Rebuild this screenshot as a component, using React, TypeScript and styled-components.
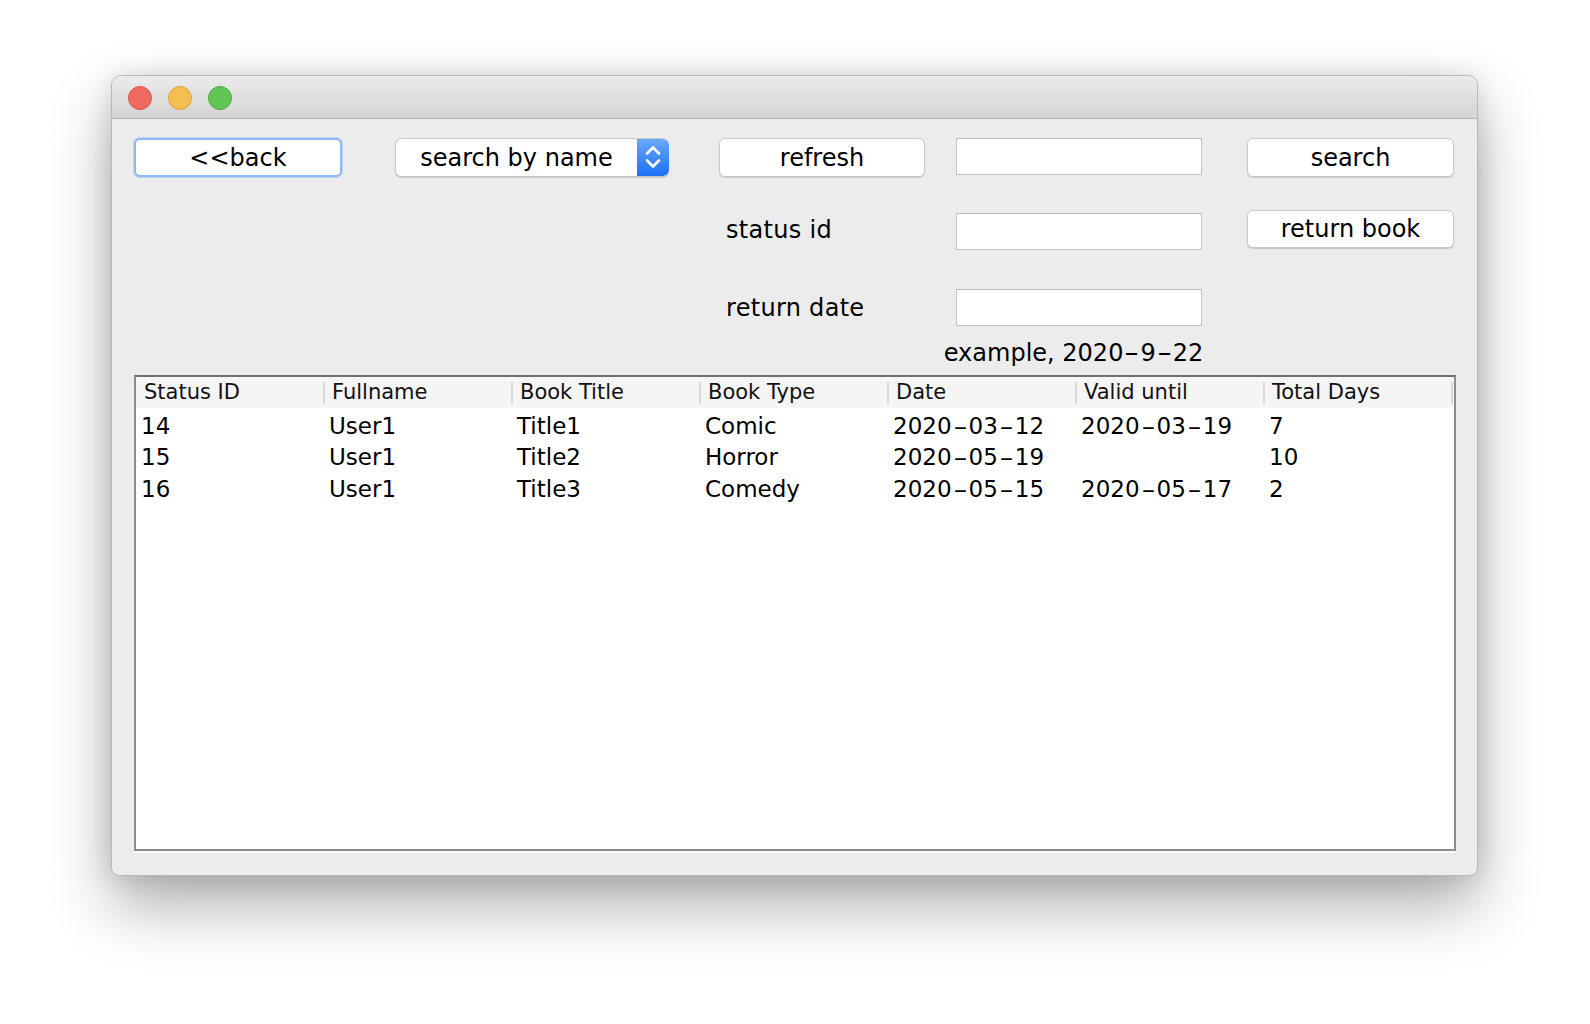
import React from "react";
import styled, { createGlobalStyle } from "styled-components";

const GlobalStyle = createGlobalStyle`
  html, body { margin: 0; padding: 0; background: #ffffff; }
  body { font-family: "DejaVu Sans", "Liberation Sans", sans-serif; }
`;

const FONT = `"DejaVu Sans", "Liberation Sans", sans-serif`;

const Page = styled.div`
  width: 1590px;
  height: 1024px;
  box-sizing: border-box;
  padding: 75px 0 0 111px;
  background: #ffffff;
  overflow: hidden;
`;

const Window = styled.div`
  width: 1367px;
  height: 801px;
  box-sizing: border-box;
  display: flex;
  flex-direction: column;
  background: #ececec;
  border: 1px solid #b8b8b8;
  border-radius: 10px 10px 8px 8px;
  box-shadow: 0 30px 62px rgba(0, 0, 0, 0.32), 0 0 26px rgba(0, 0, 0, 0.12);
  overflow: hidden;
`;

const TitleBar = styled.div`
  height: 43px;
  flex: none;
  display: flex;
  align-items: center;
  gap: 16px;
  padding: 1px 0 0 16px;
  box-sizing: border-box;
  background: linear-gradient(#ebebeb, #d4d4d4);
  border-bottom: 1px solid #b3b3b3;
`;

const Light = styled.span<{ $fill: string; $stroke: string }>`
  width: 24px;
  height: 24px;
  box-sizing: border-box;
  border-radius: 50%;
  background: ${(p) => p.$fill};
  border: 1px solid ${(p) => p.$stroke};
`;

const Content = styled.div`
  flex: 1;
  display: flex;
  flex-direction: column;
  padding: 19px 21px 24px 22px;
  min-height: 0;
`;

const FormRow = styled.div<{ $mt: number; $h: number }>`
  display: grid;
  grid-template-columns: 261px 324px 237px 291px 1fr;
  height: ${(p) => p.$h}px;
  margin-top: ${(p) => p.$mt}px;
  align-items: start;
`;

const Button = styled.button<{ $w: number; $h?: number; $focused?: boolean; $col: number; $mt?: number }>`
  grid-column: ${(p) => p.$col};
  box-sizing: border-box;
  width: ${(p) => p.$w}px;
  height: ${(p) => p.$h ?? 39}px;
  margin-top: ${(p) => p.$mt ?? 0}px;
  padding: 0;
  background: #ffffff;
  border: ${(p) => (p.$focused ? "2px solid #8db8f1" : "1px solid #c9c9c9")};
  border-radius: 6px;
  box-shadow: ${(p) =>
    p.$focused ? "0 0 0 1px rgba(160, 196, 242, 0.6)" : "0 1px 1px rgba(0, 0, 0, 0.16)"};
  font-family: ${FONT};
  font-size: 24px;
  color: #000;
  cursor: default;
`;

const Combo = styled.div<{ $col: number }>`
  grid-column: ${(p) => p.$col};
  width: 274px;
  height: 39px;
  box-sizing: border-box;
  display: flex;
  background: #ffffff;
  border: 1px solid #c9c9c9;
  border-right: none;
  border-radius: 6px;
  box-shadow: 0 1px 1px rgba(0, 0, 0, 0.16);
  overflow: hidden;
`;

const ComboText = styled.span`
  flex: 1;
  display: flex;
  align-items: center;
  justify-content: center;
  font-family: ${FONT};
  font-size: 24px;
  color: #000;
`;

const ComboArrow = styled.span`
  width: 32px;
  flex: none;
  display: flex;
  align-items: center;
  justify-content: center;
  background: linear-gradient(#6aa9fc, #1b70f5);
  border-radius: 0 6px 6px 0;
`;

const Field = styled.input<{ $col: number; $self?: string }>`
  grid-column: ${(p) => p.$col};
  align-self: ${(p) => p.$self ?? "start"};
  width: 246px;
  height: 37px;
  box-sizing: border-box;
  background: #ffffff;
  border: 1px solid #c4c4c4;
  border-top-color: #b9b9b9;
  border-radius: 0;
  outline: none;
  padding: 0 6px;
  font-family: ${FONT};
  font-size: 22px;
`;

const Label = styled.span<{ $col: number }>`
  grid-column: ${(p) => p.$col};
  align-self: center;
  padding-left: 7px;
  font-family: ${FONT};
  font-size: 24px;
  letter-spacing: 0.3px;
  color: #000;
`;

const Hint = styled.span<{ $col: number }>`
  grid-column: ${(p) => p.$col};
  justify-self: start;
  width: 265px;
  margin-left: -15px;
  text-align: center;
  line-height: 30px;
  font-family: ${FONT};
  font-size: 24px;
  white-space: nowrap;
  color: #000;
`;

const Dash = styled.span<{ $w: number }>`
  display: inline-block;
  width: ${(p) => p.$w}px;
  text-align: center;
  transform: scaleX(1.75);
`;

const TableBox = styled.div`
  flex: 1;
  margin-top: 7px;
  background: #ffffff;
  border: 2px solid #8c8c8c;
  border-top-color: #707070;
  box-shadow: 0 2px 0 #ffffff;
  display: flex;
  flex-direction: column;
  min-height: 0;
`;

const Grid = styled.div`
  display: grid;
  grid-template-columns: repeat(7, 188px);
`;

const HeaderRow = styled(Grid)`
  background: #f5f5f5;
  height: 31px;
`;

const HeaderCell = styled.div`
  position: relative;
  padding: 3px 0 0 8px;
  line-height: 25px;
  font-family: ${FONT};
  font-size: 21px;
  color: #111;
  white-space: nowrap;

  &::after {
    content: "";
    position: absolute;
    right: -1px;
    top: 5px;
    bottom: 4px;
    width: 2px;
    background: #dadada;
  }
`;

const DataRow = styled(Grid)`
  height: 31.3px;
`;

const DataCell = styled.div`
  padding: 6px 0 0 5px;
  line-height: 25px;
  font-family: ${FONT};
  font-size: 23px;
  color: #000;
  white-space: nowrap;
`;

const columns = ["Status ID", "Fullname", "Book Title", "Book Type", "Date", "Valid until", "Total Days"];

const rows = [
  ["14", "User1", "Title1", "Comic", "2020-03-12", "2020-03-19", "7"],
  ["15", "User1", "Title2", "Horror", "2020-05-19", "", "10"],
  ["16", "User1", "Title3", "Comedy", "2020-05-15", "2020-05-17", "2"],
];

function WideDashes({ text, w }: { text: string; w: number }) {
  const parts = text.split("-");
  return (
    <>
      {parts.map((p, i) => (
        <React.Fragment key={i}>
          {i > 0 && <Dash $w={w}>-</Dash>}
          {p}
        </React.Fragment>
      ))}
    </>
  );
}

const Chevrons = () => (
  <svg width="32" height="37" viewBox="0 0 32 37">
    <path d="M10 14.5 L16 8.5 L22 14.5" stroke="#fff" strokeWidth="2.6" fill="none" strokeLinecap="round" strokeLinejoin="round" />
    <path d="M10 21.5 L16 27.5 L22 21.5" stroke="#fff" strokeWidth="2.6" fill="none" strokeLinecap="round" strokeLinejoin="round" />
  </svg>
);

export default function App() {
  return (
    <>
      <GlobalStyle />
      <Page>
        <Window>
          <TitleBar>
            <Light $fill="#ee6a5f" $stroke="#d9574c" />
            <Light $fill="#f5bf4f" $stroke="#d9a33f" />
            <Light $fill="#62c655" $stroke="#50a842" />
          </TitleBar>
          <Content>
            <FormRow $mt={0} $h={39}>
              <Button $col={1} $w={208} $focused>
                &lt;&lt;back
              </Button>
              <Combo $col={2}>
                <ComboText>search by name</ComboText>
                <ComboArrow>
                  <Chevrons />
                </ComboArrow>
              </Combo>
              <Button $col={3} $w={206}>
                refresh
              </Button>
              <Field $col={4} />
              <Button $col={5} $w={207}>
                search
              </Button>
            </FormRow>
            <FormRow $mt={32} $h={41}>
              <Label $col={3}>status id</Label>
              <Field $col={4} $self="end" />
              <Button $col={5} $w={207} $h={38} $mt={1}>
                return book
              </Button>
            </FormRow>
            <FormRow $mt={39} $h={37}>
              <Label $col={3}>return date</Label>
              <Field $col={4} />
            </FormRow>
            <FormRow $mt={12} $h={30}>
              <Hint $col={4}>
                <WideDashes text="example, 2020-9-22" w={17} />
              </Hint>
            </FormRow>
            <TableBox>
              <HeaderRow>
                {columns.map((c) => (
                  <HeaderCell key={c}>{c}</HeaderCell>
                ))}
              </HeaderRow>
              {rows.map((r) => (
                <DataRow key={r[0]}>
                  {r.map((v, i) => (
                    <DataCell key={i}>
                      <WideDashes text={v} w={17} />
                    </DataCell>
                  ))}
                </DataRow>
              ))}
            </TableBox>
          </Content>
        </Window>
      </Page>
    </>
  );
}
